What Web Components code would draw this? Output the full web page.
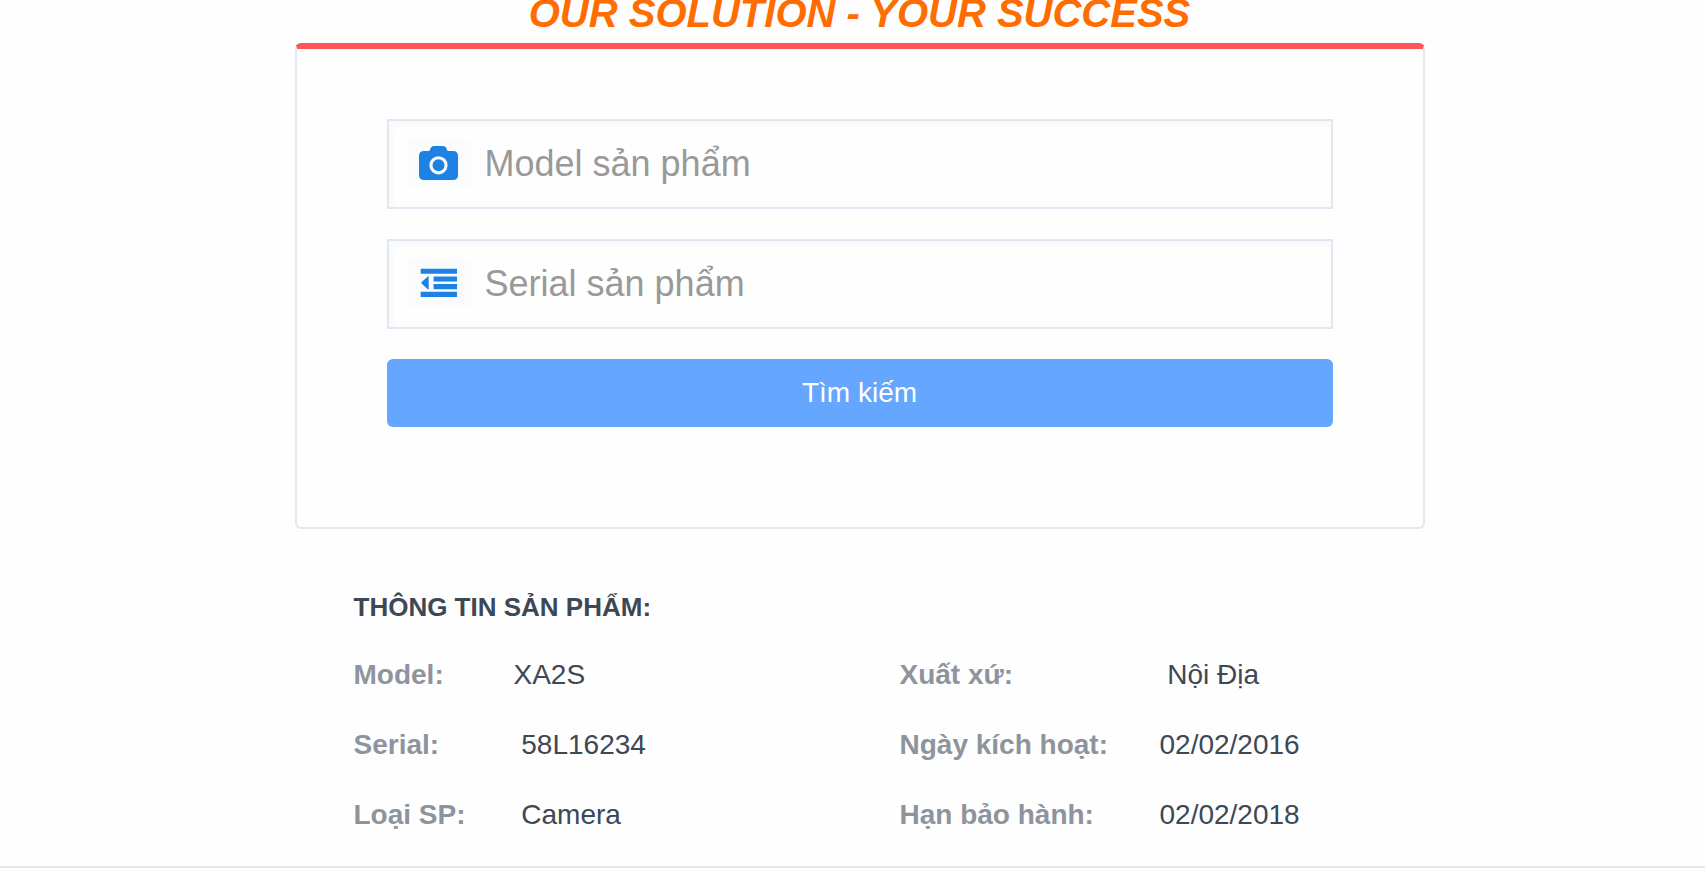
<!DOCTYPE html>
<html lang="vi">
<head>
<meta charset="utf-8">
<meta name="viewport" content="width=device-width, initial-scale=1">
<title>Tra cứu sản phẩm</title>
<style>
body { margin: 0; background: #fefefe; color: #3d4855; font-family: "Liberation Sans", Arial, sans-serif; }
</style>
</head>
<body>
<warranty-page>
  <search-card>
    <search-field name="model" label="Model sản phẩm">
      <svg slot="icon" width="39" height="34" viewBox="0 0 39 34" aria-hidden="true"><path fill="#1e82e4" fill-rule="evenodd" d="M5 5h5.500l.5-1.500Q12 0 15 0h9q3 0 4 3.500l.5 1.500H34q5 0 5 5v19q0 5-5 5H5q-5 0-5-5V10Q0 5 5 5zM19.500 10.200a9.100 9.100 0 1 0 0 18.200 9.100 9.100 0 1 0 0-18.200zM19.500 13.300a6 6 0 1 1 0 12 6 6 0 1 1 0-12z"/></svg>
    </search-field>
    <search-field name="serial" label="Serial sản phẩm">
      <svg slot="icon" width="38" height="30" viewBox="0 0 38 30" aria-hidden="true"><path fill="#1e82e4" d="M.7.7H37v5.100H.7zM13.600 8.400H37v5.100H13.600zM13.600 16.100H37v5.100H13.600zM.7 23.800H37v5.100H.7zM8.700 8.400v12.800h-1L1.500 15.400v-1.200l6.200-5.800z"/></svg>
    </search-field>
  </search-card>
  <product-info slot="info">
    <span slot="title">THÔNG TIN SẢN PHẨM:</span>
    <info-list>
      <info-row label="Model:">XA2S</info-row>
      <info-row label="Serial:">&nbsp;58L16234</info-row>
      <info-row label="Loại SP:">&nbsp;Camera</info-row>
    </info-list>
    <info-list wide>
      <info-row label="Xuất xứ:">&nbsp;Nội Địa</info-row>
      <info-row label="Ngày kích hoạt:">02/02/2016</info-row>
      <info-row label="Hạn bảo hành:">02/02/2018</info-row>
    </info-list>
  </product-info>
</warranty-page>
<script>
const define = (name, html, setup) => customElements.define(name, class extends HTMLElement {
  constructor() {
    super();
    this.attachShadow({ mode: "open" }).innerHTML = html;
  }
  connectedCallback() { if (setup) setup(this, this.shadowRoot); }
});

define("warranty-page", `
  <style>
    :host { display: block; }
    main { padding-left: 14px; padding-bottom: 16px; border-bottom: 2px solid #dfe9f2; }
    .content { max-width: 1130px; margin: 0 auto; }
    h1 { margin: 0 0 17px; font-size: 40px; line-height: 26px; font-style: italic; text-align: center; color: #ff6c00; }
  </style>
  <main><div class="content">
    <h1>OUR SOLUTION - YOUR SUCCESS</h1>
    <slot></slot>
    <slot name="info"></slot>
  </div></main>`);

define("search-card", `
  <style>
    :host { display: block; }
    form { display: flex; flex-direction: column; gap: 30px; padding: 70px 90px 100px;
      border: 2px solid #dfe9f2; border-top: 6px solid #ff5757; border-radius: 6px; }
    button { height: 68px; border: 0; border-radius: 6px; background: #65a6ff; color: #fff;
      font: 28px "Liberation Sans", Arial, sans-serif; cursor: pointer; }
  </style>
  <form><slot></slot><button type="button">Tìm kiếm</button></form>`);

define("search-field", `
  <style>
    :host { display: block; }
    div { display: flex; align-items: center; gap: 14px; height: 90px; box-sizing: border-box; padding: 0 18px;
      border: 2px solid #dfe8f2; box-shadow: inset 2px 2px 6px rgba(60, 80, 110, .04); }
    label { display: flex; flex: none; align-items: center; justify-content: center; width: 64px; height: 48px;
      margin-bottom: 2px; border-radius: 6px; background: #fafbfd; }
    input { flex: 1; min-width: 0; height: 60px; padding: 0; border: 0; outline: 0; background: none; color: #3d4855;
      font: 36px "Liberation Sans", Arial, sans-serif; }
    input::placeholder { color: #999; opacity: 1; }
  </style>
  <div><label for="box"><slot name="icon"></slot></label><input id="box" type="text"></div>`,
  (host, root) => {
    const box = root.querySelector("input");
    box.name = host.getAttribute("name");
    box.placeholder = host.getAttribute("label");
    box.setAttribute("aria-label", box.placeholder);
  });

define("product-info", `
  <style>
    :host { display: block; padding: 63px 0 0 59px; }
    h2 { margin: 0 0 18px; font-size: 26px; line-height: 30px; }
    .columns { display: grid; grid-template-columns: 546px 1fr; }
  </style>
  <h2><slot name="title"></slot></h2>
  <div class="columns"><slot></slot></div>`);

define("info-list", `
  <style>
    :host { display: block; --label-width: 160px; }
    :host([wide]) { --label-width: 260px; }
  </style>
  <slot></slot>`);

define("info-row", `
  <style>
    :host { display: block; font-size: 28px; line-height: 70px; }
    dl { display: grid; grid-template-columns: var(--label-width) 1fr; margin: 0; }
    dt { font-weight: bold; color: #8d949d; }
    dd { margin: 0; }
  </style>
  <dl><dt></dt><dd><slot></slot></dd></dl>`,
  (host, root) => { root.querySelector("dt").textContent = host.getAttribute("label"); });
</script>
</body>
</html>
